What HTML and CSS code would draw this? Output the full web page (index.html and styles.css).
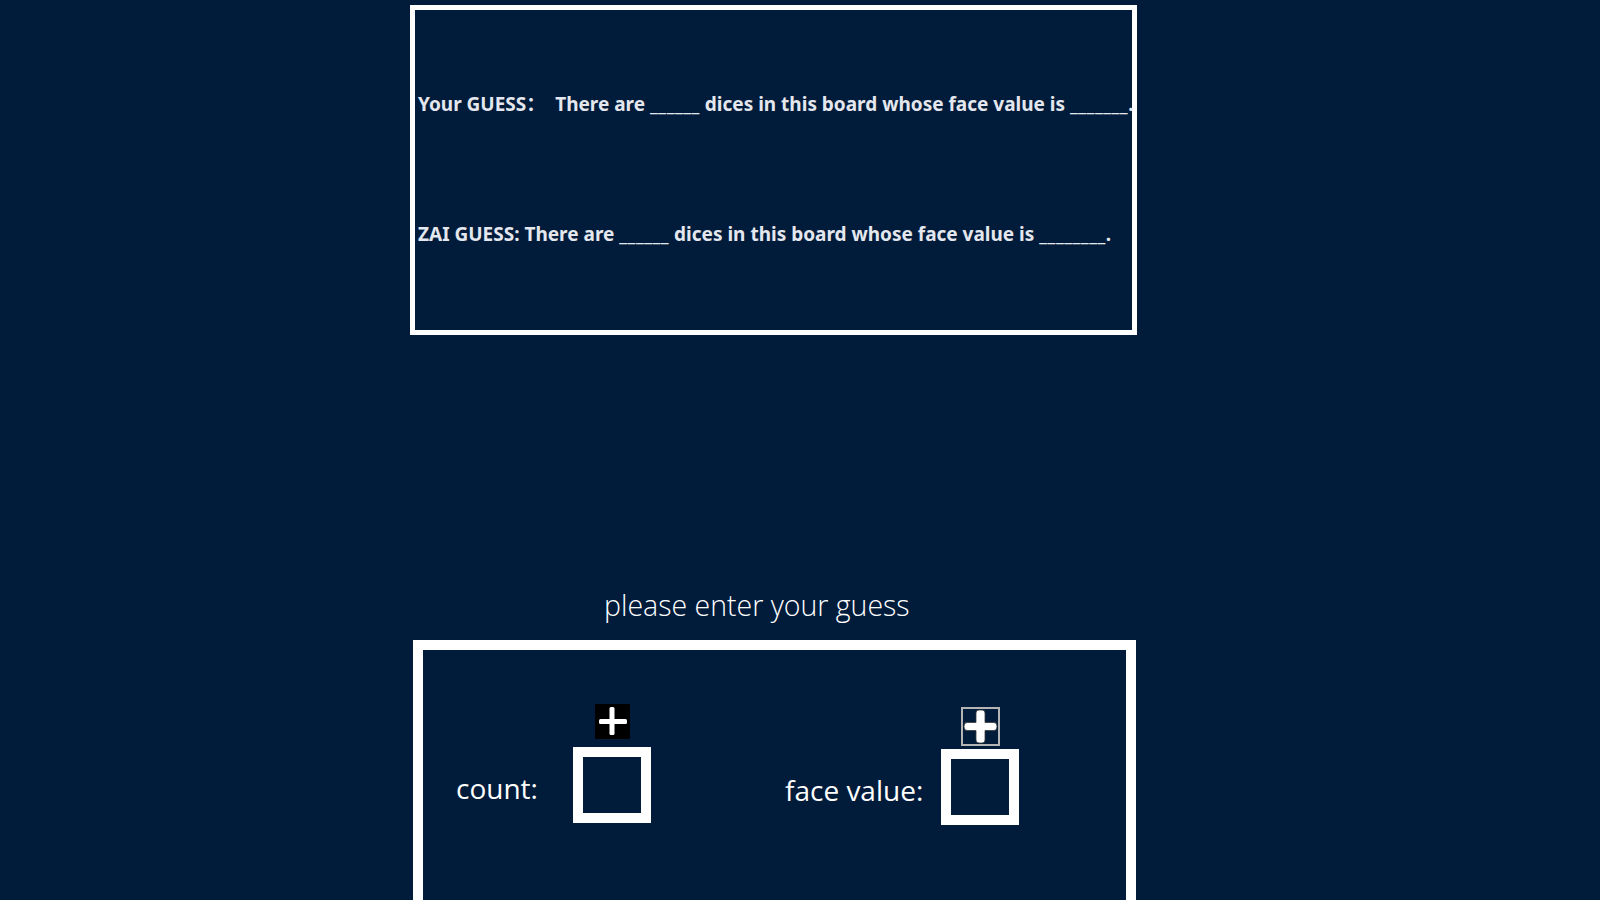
FILE: index.html
```html
<!DOCTYPE html>
<html>
<head>
<meta charset="utf-8">
<link rel="stylesheet" href="styles.css">
</head>
<body>
<div class="board">
  <div class="guess-line first">Your GUESS：&nbsp;&nbsp;There are <span class="blank">______</span> dices in this board whose face value is <span class="blank">_______</span>.</div>
  <div class="guess-line second">ZAI GUESS: There are <span class="blank">______</span> dices in this board whose face value is <span class="blank">________</span>.</div>
</div>
<div class="prompt">please enter your guess</div>
<div class="entry">
  <div class="inputs">
    <div class="label label-count">count:</div>
    <div class="stack stack-count">
      <button class="plus plus-dark" type="button" aria-label="increase count">
        <svg width="35" height="35" viewBox="0 0 35 35"><rect width="35" height="35" fill="#000"/><rect x="14.5" y="3" width="5" height="28" rx="1.5" fill="#fff"/><rect x="4" y="15" width="28" height="5" rx="1.5" fill="#fff"/></svg>
      </button>
      <div class="num-box"></div>
    </div>
    <div class="label label-face">face value:</div>
    <div class="stack stack-face">
      <button class="plus plus-light" type="button" aria-label="increase face value">
        <svg width="35" height="35" viewBox="0 0 35 35"><path d="M13 4 Q13 1 16 1 L19 1 Q22 1 22 4 L22 13.5 L31 13.5 Q34 13.5 34 17.5 Q34 21.5 31 21.5 L22 21.5 L22 31 Q22 34 19 34 L16 34 Q13 34 13 31 L13 21.5 L4 21.5 Q1 21.5 1 17.5 Q1 13.5 4 13.5 L13 13.5 Z" fill="#fff" stroke="#3a3a3a" stroke-width="0.8"/></svg>
      </button>
      <div class="num-box"></div>
    </div>
  </div>
</div>
</body>
</html>
```

FILE: styles.css
```css
html, body {
  margin: 0;
  padding: 0;
  height: 100%;
  overflow: hidden;
}

body {
  background: #011c3a;
  font-family: "Open Sans", "Noto Sans", sans-serif;
  color: #ffffff;
}

.board {
  box-sizing: border-box;
  margin: 5px 0 0 410px;
  width: 727px;
  height: 330px;
  border: 5px solid #ffffff;
  padding: 80px 0 0 3px;
}

.guess-line {
  font-family: "Noto Sans", "Noto Sans CJK SC", sans-serif;
  font-weight: 700;
  font-size: 19px;
  line-height: 28px;
  height: 28px;
  color: #e4e7ee;
  white-space: pre;
}

.blank {
  letter-spacing: 0.5px;
}

.guess-line.second {
  margin-top: 102px;
}

.prompt {
  margin: 253px 0 0 604px;
  font-size: 28.5px;
  font-weight: 300;
  line-height: 34px;
  height: 34px;
  white-space: nowrap;
}

.entry {
  box-sizing: border-box;
  margin: 18px 0 0 413px;
  width: 723px;
  height: 320px;
  border: 10px solid #ffffff;
}

.inputs {
  display: flex;
  align-items: flex-start;
  padding: 54px 0 0 33px;
}

.label {
  font-size: 28px;
  line-height: 34px;
  white-space: nowrap;
}

.label-count {
  width: 117px;
  margin-top: 67px;
}

.label-face {
  width: 156px;
  margin: 69px 0 0 134px;
}

.stack {
  display: flex;
  flex-direction: column;
  align-items: center;
  width: 78px;
}

.stack-face {
  margin-top: 3px;
}

.plus {
  display: block;
  padding: 0;
  margin: 0;
  border: none;
  background: transparent;
  line-height: 0;
}

.plus-dark {
  width: 35px;
  height: 35px;
  margin-bottom: 8px;
}

.plus-light {
  box-sizing: border-box;
  width: 39px;
  height: 39px;
  border: 2px solid #b4b4b4;
  margin-bottom: 3px;
}

.num-box {
  box-sizing: border-box;
  width: 78px;
  height: 76px;
  border: 10px solid #ffffff;
}
```
